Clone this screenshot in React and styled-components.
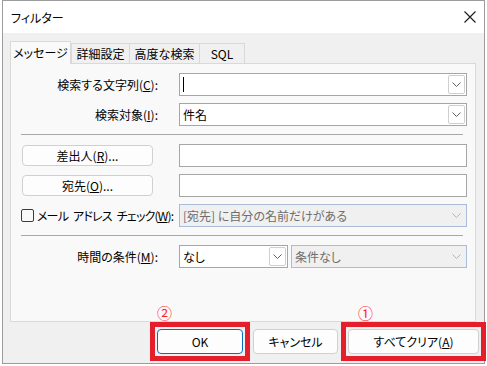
import React from 'react';
import styled, { createGlobalStyle } from 'styled-components';

const Global = createGlobalStyle`
  html, body { margin: 0; padding: 0; background: #fff; }
  body {
    font-family: "Noto Sans CJK JP", "Noto Sans", sans-serif;
    font-size: 12px;
    color: #1a1a1a;
    font-feature-settings: "palt";
  }
`;

const Window = styled.div`
  margin-left: 2px;
  width: 483px;
  height: 364px;
  box-sizing: border-box;
  border: 1px solid #9c9c9c;
  background: #f0f0f0;
  display: flex;
  flex-direction: column;
`;

const TitleBar = styled.div`
  height: 32px;
  background: #fff;
  display: flex;
  align-items: center;
  justify-content: space-between;
  padding: 0 8px 0 8px;
`;

const Title = styled.span`
  font-size: 12px;
  color: #000;
`;

const Body = styled.div`
  padding: 8px 8px 0 7px;
`;

const TabStrip = styled.div`
  display: flex;
  align-items: flex-end;
  height: 23px;
  margin-bottom: -1px;
  position: relative;
  z-index: 1;
`;

const Tab = styled.div`
  box-sizing: border-box;
  width: ${p => p.$w}px;
  height: ${p => (p.$active ? 23 : 21)}px;
  border: 1px solid #d9d9d9;
  border-bottom: ${p => (p.$active ? 'none' : '1px solid #d9d9d9')};
  margin-right: ${p => (p.$active ? 0 : -1)}px;
  background: ${p => (p.$active ? '#f9f9f9' : '#f0f0f0')};
  display: flex;
  align-items: center;
  justify-content: center;
  padding-bottom: ${p => (p.$active ? 2 : 0)}px;
  color: #000;
`;

const Panel = styled.div`
  box-sizing: border-box;
  height: 259px;
  border: 1px solid #d9d9d9;
  background: #f9f9f9;
  padding-top: 9px;
  display: flex;
  flex-direction: column;
`;

const Row = styled.div`
  display: grid;
  grid-template-columns: 147px 288px;
  column-gap: 21px;
  align-items: center;
  margin-bottom: 7px;
`;

const Label = styled.label`
  text-align: right;
  white-space: nowrap;
  color: #000;
`;

const Separator = styled.div`
  margin: 1px 0 9px 10px;
  width: 442px;
  height: 1px;
  background: #a8a8a8;
`;

const Field = styled.div`
  box-sizing: border-box;
  width: ${p => p.$w || 288}px;
  height: 23px;
  border: 1px solid ${p => (p.$disabled ? '#a9bcd8' : '#a6a6a6')};
  background: ${p => (p.$disabled ? '#f0f0f0' : '#fff')};
  color: ${p => (p.$disabled ? '#6d6d6d' : '#000')};
  display: flex;
  align-items: center;
  padding: 0 1px 0 3px;
  white-space: nowrap;
`;

const Value = styled.span`
  flex: 1;
  overflow: hidden;
`;

const Caret = styled.span`
  display: block;
  width: 1px;
  height: 15px;
  background: #000;
`;

const DropButton = styled.div`
  box-sizing: border-box;
  width: 17px;
  height: 19px;
  border: 1px solid ${p => (p.$disabled ? 'transparent' : '#cfcfcf')};
  border-radius: 2px;
  background: ${p => (p.$disabled ? 'transparent' : '#fff')};
  display: flex;
  align-items: center;
  justify-content: center;
`;

const Pair = styled.div`
  display: flex;
  gap: 3px;
`;

const SmallButton = styled.button`
  box-sizing: border-box;
  margin-left: 11px;
  width: 131px;
  height: 21px;
  border: 1px solid #d0d0d0;
  border-radius: 4px;
  background: #fdfdfd;
  font: inherit;
  color: #000;
  padding: 0;
`;

const CheckLine = styled.label`
  display: flex;
  align-items: center;
  margin-left: 10px;
  white-space: nowrap;
  letter-spacing: -0.8px;
  word-spacing: 3px;
  color: #000;
`;

const Box = styled.span`
  flex-shrink: 0;
  box-sizing: border-box;
  width: 13px;
  height: 13px;
  border: 1px solid #3c3c3c;
  border-radius: 2px;
  margin-right: 3px;
`;

const Footer = styled.div`
  display: flex;
  justify-content: flex-end;
  gap: 10px;
  padding: 7px 5px 0 0;
`;

const Slot = styled.div`
  position: relative;
  display: flex;
  outline: 5px solid #e41e2b;
  outline-offset: 2px;
`;

const Button = styled.button`
  box-sizing: border-box;
  width: ${p => p.$w}px;
  height: 25px;
  border: 1px solid ${p => (p.$primary ? '#0f68c0' : '#d0d0d0')};
  border-radius: 4px;
  background: #fdfdfd;
  font: inherit;
  color: #000;
  padding: 0;
`;

const Badge = styled.span`
  position: absolute;
  top: -26px;
  left: ${p => p.$x}px;
  color: #ff2020;
  font-size: 15px;
  line-height: 20px;
  font-feature-settings: normal;
`;

const Chevron = ({ color = '#5f5f5f' }) => (
  <svg width="9" height="5" viewBox="0 0 9 5">
    <path d="M0.5 0.5 L4.5 4.5 L8.5 0.5" fill="none" stroke={color} strokeWidth="1" />
  </svg>
);

const CloseIcon = () => (
  <svg width="12" height="12" viewBox="0 0 12 12">
    <path d="M0.5 0.5 L11.5 11.5 M11.5 0.5 L0.5 11.5" stroke="#1a1a1a" strokeWidth="1.1" />
  </svg>
);

const Combo = ({ w, disabled, children }) => (
  <Field $w={w} $disabled={disabled}>
    <Value>{children}</Value>
    <DropButton $disabled={disabled}>
      <Chevron color={disabled ? '#b4b4b4' : '#5f5f5f'} />
    </DropButton>
  </Field>
);

const App = () => (
  <>
    <Global />
    <Window>
      <TitleBar>
        <Title>フィルター</Title>
        <CloseIcon />
      </TitleBar>
      <Body>
        <TabStrip>
          <Tab $w={61} $active>メッセージ</Tab>
          <Tab $w={59}>詳細設定</Tab>
          <Tab $w={71}>高度な検索</Tab>
          <Tab $w={46}>SQL</Tab>
        </TabStrip>
        <Panel>
          <Row>
            <Label>検索する文字列(<u>C</u>):</Label>
            <Combo><Caret /></Combo>
          </Row>
          <Row>
            <Label>検索対象(<u>I</u>):</Label>
            <Combo>件名</Combo>
          </Row>
          <Separator />
          <Row>
            <SmallButton>差出人(<u>R</u>)...</SmallButton>
            <Field />
          </Row>
          <Row>
            <SmallButton>宛先(<u>O</u>)...</SmallButton>
            <Field />
          </Row>
          <Row>
            <CheckLine><Box />メール アドレス チェック(<u>W</u>):</CheckLine>
            <Combo disabled>[宛先] に自分の名前だけがある</Combo>
          </Row>
          <Separator />
          <Row>
            <Label>時間の条件(<u>M</u>):</Label>
            <Pair>
              <Combo w={109}>なし</Combo>
              <Combo w={176} disabled>条件なし</Combo>
            </Pair>
          </Row>
        </Panel>
      </Body>
      <Footer>
        <Slot>
          <Badge $x={0}>②</Badge>
          <Button $w={86} $primary>OK</Button>
        </Slot>
        <Button $w={85}>キャンセル</Button>
        <Slot>
          <Badge $x={10}>①</Badge>
          <Button $w={131}>すべてクリア(<u>A</u>)</Button>
        </Slot>
      </Footer>
    </Window>
  </>
);

export default App;
